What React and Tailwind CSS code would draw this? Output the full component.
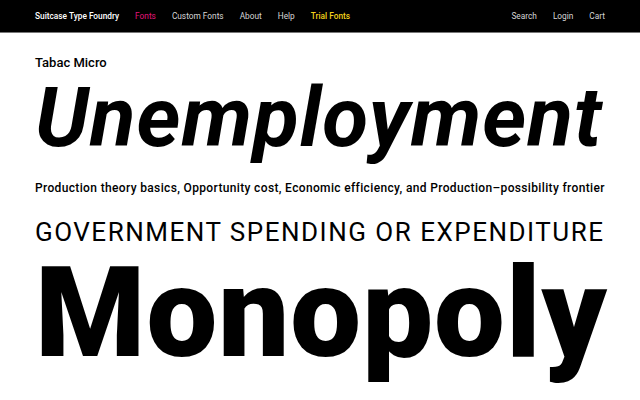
export default function App() {
  return (
    <div className="w-[640px] h-[400px] overflow-hidden bg-white">
      <nav className="h-[33px] bg-black border-b border-[#777] flex items-center px-[35px] pt-[1px] text-[8.3px] font-['Roboto',sans-serif] gap-[16px]">
        <span className="text-white font-medium">Suitcase Type Foundry</span>
        <span className="text-[#e0157c]">Fonts</span>
        <span className="text-[#d6d6d6]">Custom Fonts</span>
        <span className="text-[#d6d6d6]">About</span>
        <span className="text-[#d6d6d6]">Help</span>
        <span className="text-[#f2d21b] font-medium">Trial Fonts</span>
        <span className="ml-auto text-[#d6d6d6]">Search</span>
        <span className="text-[#d6d6d6]">Login</span>
        <span className="text-[#d6d6d6]">Cart</span>
      </nav>
      <main className="px-[35px] text-black font-['Roboto',sans-serif]">
        <div className="pt-[22px] text-[13px] leading-[16px] font-medium">Tabac Micro</div>
        <div className="mt-[5px] text-[84px] leading-[84px] font-bold italic whitespace-nowrap tracking-[1px]">Unemployment</div>
        <div className="mt-[21px] text-[12px] leading-[14px] font-medium whitespace-nowrap tracking-[0.35px]">Production theory basics, Opportunity cost, Economic efficiency, and Production–possibility frontier</div>
        <div className="mt-[22px] text-[26px] leading-[30px] font-normal whitespace-nowrap tracking-[1.5px]">GOVERNMENT SPENDING OR EXPENDITURE</div>
        <div className="mt-[3px] text-[126px] leading-[126px] font-black whitespace-nowrap tracking-[1px]">Monopoly</div>
      </main>
    </div>
  );
}
